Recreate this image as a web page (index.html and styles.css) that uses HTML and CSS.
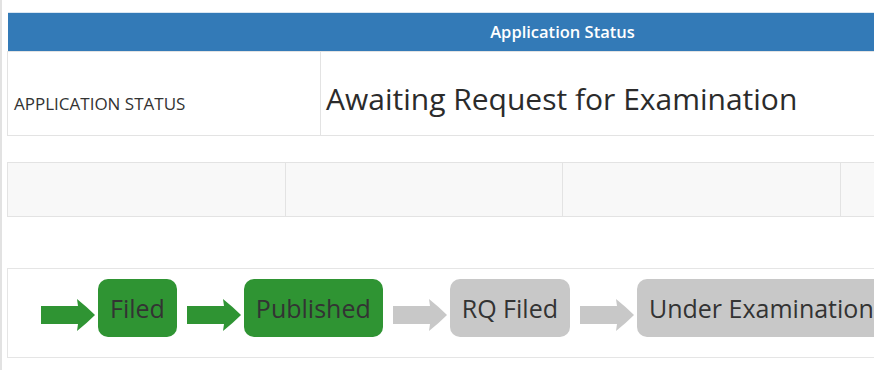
FILE: index.html
```html
<!DOCTYPE html>
<html lang="en">
<head>
  <meta charset="UTF-8">
  <meta name="viewport" content="width=device-width, initial-scale=1.0">
  <title>Application Status</title>
  <link rel="stylesheet" href="styles.css">
</head>
<body>
  <div class="page">
    <table class="status-table">
      <thead>
        <tr>
          <th colspan="2">Application Status</th>
        </tr>
      </thead>
      <tbody>
        <tr>
          <td class="label">APPLICATION STATUS</td>
          <td class="value"><h2>Awaiting Request for Examination</h2></td>
        </tr>
      </tbody>
    </table>

    <table class="empty-table">
      <tr>
        <td></td>
        <td></td>
        <td></td>
        <td></td>
      </tr>
    </table>

    <div class="progress">
      <svg class="arrow done" viewBox="0 0 54 34"><path d="M0 8H37L36 1Q46 9 54 17Q46 25 36 33L37 26H0Z"/></svg>
      <div class="step done">Filed</div>
      <svg class="arrow done" viewBox="0 0 54 34"><path d="M0 8H37L36 1Q46 9 54 17Q46 25 36 33L37 26H0Z"/></svg>
      <div class="step done">Published</div>
      <svg class="arrow" viewBox="0 0 54 34"><path d="M0 8H37L36 1Q46 9 54 17Q46 25 36 33L37 26H0Z"/></svg>
      <div class="step">RQ Filed</div>
      <svg class="arrow" viewBox="0 0 54 34"><path d="M0 8H37L36 1Q46 9 54 17Q46 25 36 33L37 26H0Z"/></svg>
      <div class="step">Under Examination</div>
    </div>
  </div>
</body>
</html>
```

FILE: styles.css
```css
html, body {
  overflow: hidden;
}

body {
  margin: 0;
  font-family: "Open Sans", Arial, sans-serif;
  font-size: 14px;
  color: #333;
  background-color: #fff;
}

.page {
  border-left: 2px solid #e2e2e2;
  padding: 12px 0 12px 5px;
  width: 1111px;
  min-height: 400px;
}

table {
  border-collapse: collapse;
  width: 1111px;
}

.status-table th {
  background-color: #337ab7;
  border-top: 1px solid #d9e6f2;
  color: #fff;
  font-weight: 600;
  font-size: 16.5px;
  line-height: 22px;
  padding: 8px;
  text-align: center;
}

.status-table td {
  border: 1px solid #e3e3e3;
  padding: 8px;
  vertical-align: baseline;
}

.status-table .label {
  width: 298px;
  padding-left: 6px;
  font-size: 17px;
  text-transform: uppercase;
}

.status-table h2 {
  margin: 22px 0 12px -3px;
  font-size: 30px;
  font-weight: 400;
  line-height: 33px;
  color: #2b2b2b;
}

.empty-table {
  margin-top: 26px;
  background-color: #f8f8f8;
}

.empty-table td {
  border: 1px solid #e3e3e3;
  height: 53px;
  width: 25%;
  padding: 0;
}

.progress {
  margin-top: 51px;
  border: 1px solid #e5e5e5;
  padding: 10px 0 20px 23px;
  display: flex;
  align-items: center;
}

.arrow {
  width: 54px;
  height: 34px;
  margin: 14px 3px 0 10px;
  fill: #c8c8c8;
  flex-shrink: 0;
}

.arrow.done {
  fill: #2f9433;
}

.step {
  background-color: #c8c8c8;
  border-radius: 10px;
  font-size: 25px;
  line-height: 34px;
  padding: 12px 12px;
  white-space: nowrap;
  flex-shrink: 0;
}

.step.done {
  background-color: #2f9433;
}
```
